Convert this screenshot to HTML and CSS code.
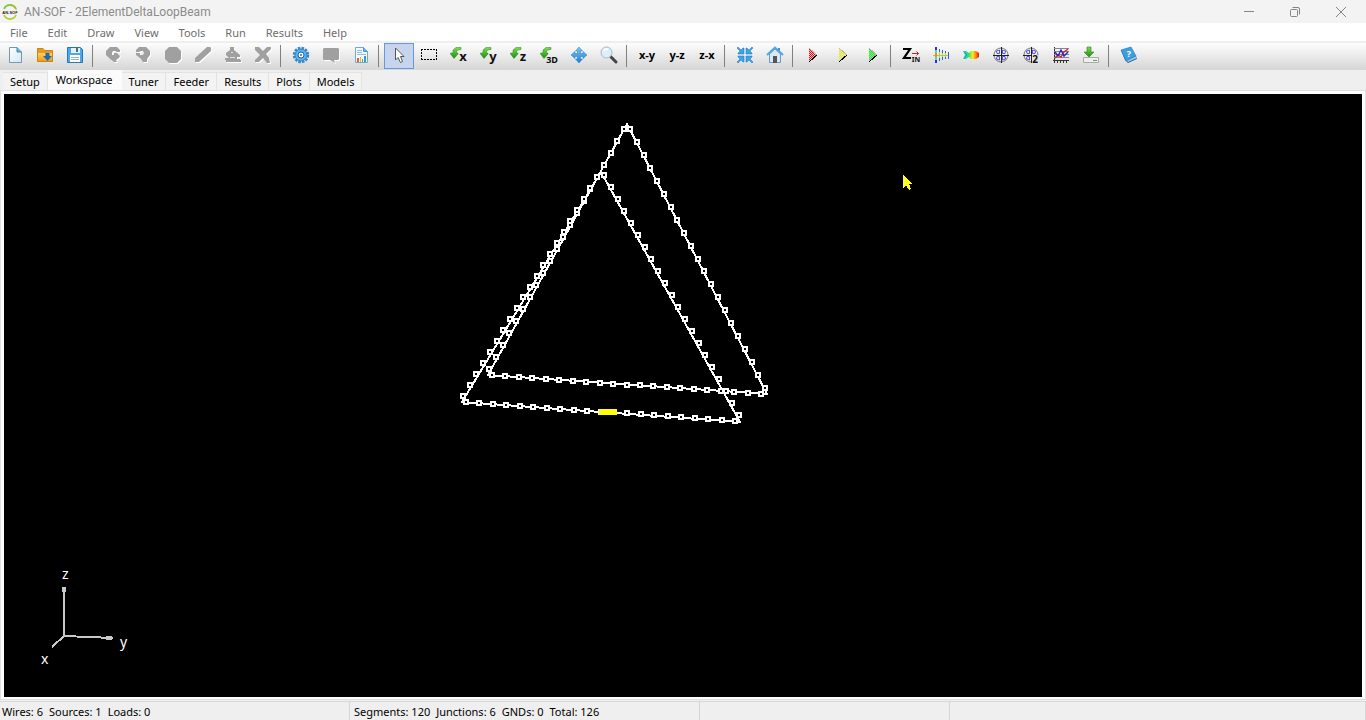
FILE: index.html
```html
<!DOCTYPE html>
<html lang="en">
<head>
<meta charset="utf-8">
<title>AN-SOF - 2ElementDeltaLoopBeam</title>
<link rel="stylesheet" href="styles.css">
</head>
<body>
<svg class="defs" aria-hidden="true">
  <defs>
    <linearGradient id="blue" x1="0" y1="0" x2="0" y2="1"><stop offset="0" stop-color="#7cc8f6"/><stop offset="1" stop-color="#1c7fd0"/></linearGradient>
    <linearGradient id="paper" x1="0" y1="0" x2="1" y2="1"><stop offset="0" stop-color="#ffffff"/><stop offset="1" stop-color="#d3e7f4"/></linearGradient>
    <linearGradient id="gold" x1="0" y1="0" x2="0" y2="1"><stop offset="0" stop-color="#ffd35c"/><stop offset="1" stop-color="#f19a1c"/></linearGradient>
    <linearGradient id="green" x1="0" y1="0" x2="0" y2="1"><stop offset="0" stop-color="#7be04c"/><stop offset="1" stop-color="#1d8a14"/></linearGradient>
    <linearGradient id="heat" x1="0" y1="0" x2="1" y2="0"><stop offset="0" stop-color="#22c7e8"/><stop offset=".35" stop-color="#28e070"/><stop offset=".6" stop-color="#f4ee20"/><stop offset=".8" stop-color="#ff8a10"/><stop offset="1" stop-color="#ee1010"/></linearGradient>
    <pattern id="dotRed" width="2" height="2" patternUnits="userSpaceOnUse"><rect width="2" height="2" fill="#d0d0d0"/><path d="M0 0h1v1h-1zM1 1h1v1h-1z" fill="#ff0000"/></pattern>
    <pattern id="dotYellow" width="2" height="2" patternUnits="userSpaceOnUse"><rect width="2" height="2" fill="#d0d0d0"/><path d="M0 0h1v1h-1zM1 1h1v1h-1z" fill="#ffff00"/></pattern>
    <pattern id="dotGreen" width="2" height="2" patternUnits="userSpaceOnUse"><rect width="2" height="2" fill="#b8c8b8"/><path d="M0 0h1v1h-1zM1 1h1v1h-1z" fill="#00ff00"/></pattern>
    <path id="turn" d="M12 2.500H7L4 5V8H1.500V9L5 13.500L9 9V8H7.500V6L9 5L12 4.500Z"/>
    <g id="rose" fill="none"><circle cx="10" cy="10" r="7" stroke="#777"/><path d="M2 10H18M10 2V18" stroke="#222" shape-rendering="crispEdges"/><path d="M8.500 8.500H6L5.500 6L8.500 5ZM11.500 8.500H14L14.500 6L11.500 5ZM8.500 11.500H6L5.500 14L8.500 15ZM11.500 11.500H14L14.500 14L11.500 15Z" stroke="#3030dd" stroke-width=".8"/></g>
  </defs>
</svg>

<header class="titlebar">
  <svg class="logo" viewBox="0 0 16 16"><path d="M2 5A6.500 6.500 0 0 1 14 5" fill="none" stroke="#8cc63c" stroke-width="1.800"/><path d="M2 11A6.500 6.500 0 0 0 14 11" fill="none" stroke="#b9ce2c" stroke-width="1.800"/><path d="M11 2.500Q14 4 14.500 6" fill="none" stroke="#f0a030"/><text x="8" y="10" text-anchor="middle" class="logo-text">AN-SOF</text></svg>
  <h1 class="title">AN-SOF - 2ElementDeltaLoopBeam</h1>
  <div class="window-buttons">
    <button aria-label="Minimize"><svg viewBox="0 0 12 12"><path d="M1 5.500H11"/></svg></button>
    <button aria-label="Restore"><svg viewBox="0 0 12 12"><rect x="1.500" y="3.500" width="7" height="7" rx="1"/><path d="M3.500 1.500H9Q10.500 1.500 10.500 3V8.500"/></svg></button>
    <button aria-label="Close"><svg viewBox="0 0 12 12"><path d="M1 1L11 11M11 1L1 11"/></svg></button>
  </div>
</header>

<nav class="menubar">
  <button>File</button><button>Edit</button><button>Draw</button><button>View</button><button>Tools</button><button>Run</button><button>Results</button><button>Help</button>
</nav>

<div class="toolbar" role="toolbar">
  <button aria-label="New"><svg viewBox="0 0 20 20"><path d="M4.500 2.500H12L16.500 7V17.500H4.500Z" fill="url(#paper)" stroke="#7996aa"/><path d="M12 2.500V7H16.500" fill="#58b4e8" stroke="#4888b0"/></svg></button>
  <button aria-label="Open"><svg viewBox="0 0 20 20"><path d="M2.500 3.500H8L9.500 5.500H17.500V16.500H2.500Z" fill="#e89a20" stroke="#c98516"/><path d="M3 8H17V16H3Z" fill="url(#gold)"/><path d="M10.500 8H14.500V11H17L12.500 16L8 11H10.500Z" fill="#1b6cb8"/></svg></button>
  <button aria-label="Save"><svg viewBox="0 0 20 20"><path d="M2.500 2.500H15.500L17.500 4.500V17.500H2.500Z" fill="#4aa9ea" stroke="#2377b8"/><rect x="6" y="3" width="9" height="5" fill="#e7f2fa"/><rect x="11" y="3" width="2" height="4" fill="#4b6e8a"/><rect x="5" y="10" width="10" height="7" fill="#fff"/><path d="M6 12.500H14M6 14.500H14" stroke="#9ab5c8"/></svg></button>
  <i class="sep"></i>
  <button class="off" aria-label="Undo"><svg viewBox="0 0 20 20"><path d="M7 2H14L17 5V7H14L12 6H10L9 8V10H11V8H14L17 11L16 13L13 15L14 17H11L7 14L3 10V6Z"/></svg></button>
  <button class="off" aria-label="Redo"><svg viewBox="0 0 20 20"><path d="M6 2H13L17 6V10L14 14V17H10L8 14L3 10V8H7V10H10L11 8L10 6H8L6 7H3V5Z"/></svg></button>
  <button class="off" aria-label="Stop"><svg viewBox="0 0 20 20"><path d="M6 2H14L18 6V14L14 18H6L2 14V6Z"/></svg></button>
  <button class="off" aria-label="Edit line"><svg viewBox="0 0 20 20"><path d="M14 2H17L18 3V6L6 17H2V13Z"/></svg></button>
  <button class="off" aria-label="Fill"><svg viewBox="0 0 20 20"><path d="M7 2H11V5L17 10V12H14V14H17V15H18V17H3V15H2V13H6L3 10V8L7 5Z"/><path d="M8 7.500H10M7 12.500H12" fill="none" stroke="#e5e5e5"/></svg></button>
  <button class="off" aria-label="Delete"><svg viewBox="0 0 20 20"><path d="M2 2H6L10 6L14 2H18V4L13 9L16 13L17 18H14L10 13L6 17H2V15L7 10L2 5Z"/></svg></button>
  <i class="sep"></i>
  <button aria-label="Settings"><svg viewBox="0 0 20 20"><circle cx="10" cy="10" r="7" fill="none" stroke="#3688c8" stroke-width="2.500" stroke-dasharray="2.500 1.200"/><circle cx="10" cy="10" r="6" fill="#58b2ef" stroke="#2e80c4"/><circle cx="10" cy="10" r="3" fill="#fff" stroke="#24639b"/><circle cx="10" cy="10" r="1" fill="#316fa4"/></svg></button>
  <button class="off" aria-label="Comment"><svg viewBox="0 0 20 20"><path d="M3 3H17L18 4V14L17 15H13L14 18L9 15H3L2 14V4Z"/></svg></button>
  <button aria-label="Report"><svg viewBox="0 0 20 20"><path d="M4.500 2.500H12.500L16.500 6.500V17.500H4.500Z" fill="#f4fbff" stroke="#77a9c8"/><path d="M12.500 2.500V6.500H16.500" fill="#5eb4e5" stroke="#4c9aca"/><path d="M6 5.500H11M6 7.500H11M6 9.500H15" stroke="#8ebedc"/><path d="M6 13H8V17H6Z" fill="#ec5830"/><path d="M9 12H10V17H9Z" fill="#f3b02d"/><path d="M11 14H12V17H11Z" fill="#48b558"/><path d="M13 11H15V17H13Z" fill="#339bdd"/></svg></button>
  <i class="sep"></i>
  <button class="active" aria-label="Select"><svg viewBox="0 0 20 20"><path d="M6.500 3V15L9 12.500L11.500 17.500L13.500 16.500L11.500 11.500H15Z" fill="#fff" stroke="#555"/></svg></button>
  <button aria-label="Select box"><svg viewBox="0 0 20 20"><path d="M2 4.500H18M2 14.500H18M2.500 4V15M17.500 4V15" fill="none" stroke="#000" stroke-dasharray="2 1" shape-rendering="crispEdges"/></svg></button>
  <button aria-label="Rotate x"><svg viewBox="0 0 20 20"><use href="#turn" class="turn"/><text x="14" y="16" class="axis">x</text></svg></button>
  <button aria-label="Rotate y"><svg viewBox="0 0 20 20"><use href="#turn" class="turn"/><text x="14" y="16" class="axis">y</text></svg></button>
  <button aria-label="Rotate z"><svg viewBox="0 0 20 20"><use href="#turn" class="turn"/><text x="14" y="16" class="axis">z</text></svg></button>
  <button aria-label="Rotate 3D"><svg viewBox="0 0 20 20"><use href="#turn" class="turn"/><text x="13" y="18" class="axis small">3D</text></svg></button>
  <button aria-label="Pan"><svg viewBox="0 0 20 20"><path d="M10 2L13.500 6H11.500V8.500H14V6.500L18 10L14 13.500V11.500H11.500V14H13.500L10 18L6.500 14H8.500V11.500H6V13.500L2 10L6 6.500V8.500H8.500V6H6.500Z" fill="url(#blue)" stroke="#247fc2" stroke-width=".5"/></svg></button>
  <button aria-label="Zoom"><svg viewBox="0 0 20 20"><path d="M11 11L17 17" stroke="#444" stroke-width="3" stroke-linecap="round"/><circle cx="7.500" cy="7.500" r="5.500" fill="#d8f0fb" stroke="#a6b5bd"/><path d="M4.500 6Q6 3.500 9 4.500" fill="none" stroke="#fff" stroke-width="2"/></svg></button>
  <i class="sep"></i>
  <button class="plane">x-y</button>
  <button class="plane">y-z</button>
  <button class="plane">z-x</button>
  <i class="sep"></i>
  <button aria-label="Fit"><svg viewBox="0 0 20 20"><path d="M2 3L3 2L6 5L8 3H9V9H3V8L5 6ZM18 3L17 2L14 5L12 3H11V9H17V8L15 6ZM2 17L3 18L6 15L8 17H9V11H3V12L5 14ZM18 17L17 18L14 15L12 17H11V11H17V12L15 14Z" fill="#38a7ea" stroke="#1f72b2" stroke-width=".5"/></svg></button>
  <button aria-label="Home"><svg viewBox="0 0 20 20"><path d="M4.500 9V17.500H15.500V9L10 4Z" fill="#d9e8f3" stroke="#6c9dc4"/><path d="M13 3H15V6H13Z" fill="#4d8cb5"/><path d="M2 10L10 2.500L18 10" fill="none" stroke="#4ba8e6" stroke-width="2"/><rect x="8" y="11" width="4" height="7" fill="#555"/></svg></button>
  <i class="sep"></i>
  <button aria-label="Run currents"><svg viewBox="0 0 20 20" shape-rendering="crispEdges"><path d="M6 3V17L14 10Z" fill="url(#dotRed)"/><path d="M6 3L14 10" stroke="#b8b8b8"/><path d="M6 17L14 10" stroke="#000"/></svg></button>
  <button aria-label="Run far field"><svg viewBox="0 0 20 20" shape-rendering="crispEdges"><path d="M6 3V17L14 10Z" fill="url(#dotYellow)"/><path d="M6 3L14 10" stroke="#b8b8b8"/><path d="M6 17L14 10" stroke="#000"/></svg></button>
  <button aria-label="Run all"><svg viewBox="0 0 20 20" shape-rendering="crispEdges"><path d="M6 3V17L14 10Z" fill="url(#dotGreen)"/><path d="M6 3L14 10" stroke="#b8b8b8"/><path d="M6 17L14 10" stroke="#000"/></svg></button>
  <i class="sep"></i>
  <button aria-label="Input impedance"><svg viewBox="0 0 20 20"><path d="M2 4H9L3 13H10" fill="none" stroke="#000" stroke-width="2.200"/><path d="M11 8.500H18M15.500 6.500L17.500 8.500L15.500 10.500" fill="none" stroke="#f01818"/><text x="15" y="17" class="axis tiny">IN</text></svg></button>
  <button aria-label="Currents"><svg viewBox="0 0 20 20" shape-rendering="crispEdges"><path d="M2 10H18" stroke="#e8b020"/><path d="M5 2V5M5 15V18" stroke="#2929ff" stroke-width="2"/><path d="M5 5V15" stroke="#40e0b0" stroke-width="2"/><path d="M5 8V12" stroke="#ff8030" stroke-width="2"/><path d="M8.500 4V16M11.500 5V15M14.500 6V14M17.500 7V14" stroke="#2464dc"/><path d="M8.500 7V13M11.500 8V12M14.500 8V12" stroke="#9fe229"/></svg></button>
  <button aria-label="Radiation pattern"><svg viewBox="0 0 20 20"><path d="M2 6H5L8 8L10 6H15L18 8V12L15 14H10L8 12L5 14H2L4 10Z" fill="url(#heat)"/><path d="M3 7L6 10L3 13" stroke="#279bab" fill="none"/></svg></button>
  <button aria-label="Polar plot"><svg viewBox="0 0 20 20"><use href="#rose"/></svg></button>
  <button aria-label="Polar plot 2"><svg viewBox="0 0 20 20"><use href="#rose"/><rect x="11" y="10" width="7" height="9" fill="#e3e3e3"/><text x="14" y="18" class="axis two">2</text></svg></button>
  <button aria-label="Line plot"><svg viewBox="0 0 20 20"><path d="M3.500 2V18M2 15.500H18M6.500 15V18M9.500 15V18M12.500 15V18M15.500 15V18" stroke="#333" shape-rendering="crispEdges"/><path d="M3 3.500H18M3 6.500H18M3 9.500H18M3 12.500H18" stroke="#888" shape-rendering="crispEdges"/><path d="M4 13L7 10L10 12L13 7L17 4" fill="none" stroke="#df2020" stroke-width="1.400"/><path d="M4 7L7 11L10 5L13 11L17 7" fill="none" stroke="#2525ca" stroke-width="1.400"/></svg></button>
  <button aria-label="Export"><svg viewBox="0 0 20 20"><path d="M2.500 12.500H17.500V17.500H2.500Z" fill="#eee" stroke="#aaa"/><path d="M12 15.500H16" stroke="#44bd31"/><path d="M6 2H10V7H13L8 12L3 7H6Z" fill="url(#green)" stroke="#278817" stroke-width=".6"/></svg></button>
  <i class="sep"></i>
  <button aria-label="Help guide"><svg viewBox="0 0 20 20"><path d="M2 5L6 15L9 18L18 14L17 11Z" fill="#15609d"/><path d="M7 15L17 11L18 13L9 17Z" fill="#9fcbe8"/><path d="M2 5L12 2L17 11L7 16Z" fill="#3b9ee0" stroke="#2477b4" stroke-width=".6"/><text x="10" y="12" class="axis query">?</text></svg></button>
</div>

<div class="tabs" role="tablist">
  <button role="tab">Setup</button><button role="tab" aria-selected="true" class="current">Workspace</button><button role="tab">Tuner</button><button role="tab">Feeder</button><button role="tab">Results</button><button role="tab">Plots</button><button role="tab">Models</button>
</div>

<main class="panel">
  <div class="canvas">
    <svg class="scene" width="900" height="600" role="img" aria-label="Two element delta loop wires">
      <g id="wires" fill="none" stroke="#fff" stroke-width="2"></g>
      <g id="nodes" fill="#000" stroke="#fff" stroke-width="2"></g>
      <path d="M595 318H613" stroke="#ffff00" stroke-width="6"/>
      <path d="M899 81V94L902 91L905 96L907 95L905 90H909Z" fill="#ffff20"/>
      <g fill="none" stroke="#c8c8c8" stroke-width="2"><path d="M60 542V493M60 542L109 544M60 542L48 553"/><path d="M60 493V498M102 544L108 544" stroke-width="4"/></g>
      <g class="axis-names"><text x="58" y="485">z</text><text x="116" y="553">y</text><text x="37" y="570">x</text></g>
    </svg>
  </div>
</main>

<footer class="status">
  <div class="cell wide"><span>Wires: 6</span><span>Sources: 1</span><span>Loads: 0</span></div>
  <div class="cell wide"><span>Segments: 120</span><span>Junctions: 6</span><span>GNDs: 0</span><span>Total: 126</span></div>
  <div class="cell mid"></div>
  <div class="cell rest"></div>
</footer>
<script src="script.js"></script>
</body>
</html>
```
FILE: styles.css
```css
* { box-sizing: border-box; }
body {
  margin: 0;
  height: 100vh;
  display: flex;
  flex-direction: column;
  overflow: hidden;
  background: #efefef;
  color: #000;
  font: 11px/14px "Noto Sans", "Open Sans", sans-serif;
}
button { font: inherit; color: inherit; background: none; border: 0; padding: 0; margin: 0; }
.defs { position: absolute; width: 0; height: 0; }

.titlebar { display: flex; align-items: center; height: 23px; padding: 0 2px; background: #f3f3f3; color: #8b8b8b; }
.logo { width: 16px; height: 16px; }
.logo-text { font: bold 4px "Liberation Sans", sans-serif; fill: #222; }
.title { flex: 1; margin: 0 0 0 6px; font: 12px/14px Roboto, sans-serif; }
.window-buttons { display: flex; }
.window-buttons button { width: 46px; height: 22px; display: flex; align-items: center; justify-content: center; }
.window-buttons svg { width: 12px; height: 12px; fill: none; stroke: #858585; }

.menubar { display: flex; height: 18px; background: #fff; color: #6d6d6d; }
.menubar button { padding: 1px 10px 0; }

.toolbar { display: flex; height: 29px; border-top: 2px solid #efefef; background: linear-gradient(#fdfdfd, #d6d6d6); }
.toolbar button { width: 30px; height: 26px; display: flex; align-items: center; justify-content: center; }
.toolbar svg { width: 20px; height: 20px; margin-bottom: 2px; }
.toolbar .active { background: #c6d4ee; border: 1px solid #6a96dc; }
.sep { width: 8px; padding: 2px 0 0 2px; }
.sep::before { content: ""; display: block; width: 1px; height: 22px; background: #808080; }
.off svg { fill: #a0a0a0; filter: drop-shadow(1px 1px 0 #fff); }
.turn { fill: url(#green); stroke: #238a18; stroke-width: 0.5; }
.axis { font: bold 13px "Noto Sans", sans-serif; text-anchor: middle; fill: #111; }
.small { font-size: 9px; }
.tiny { font-size: 7px; }
.two { font-size: 10px; }
.query { font-size: 9px; fill: #fff; }
.toolbar .plane { font-weight: bold; padding-bottom: 2px; }

.tabs { display: flex; align-items: flex-end; height: 20px; padding-left: 3px; }
.tabs button { height: 18px; padding: 0 7px; background: #f3f3f3; border: 1px solid #e3e3e3; border-width: 1px 1px 0 0; }
.tabs .current { height: 20px; padding: 0 8px 2px; background: #fbfbfb; border-color: #fbfbfb; }

.panel { flex: 1; display: flex; min-height: 0; padding: 3px 3px 2px; border: 1px solid #e0e0e0; background: #fdfdfd; }
.canvas { flex: 1; overflow: hidden; background: #000; }
.scene { display: block; overflow: visible; shape-rendering: crispEdges; }
.axis-names { font-size: 14px; fill: #fff; }

.status { display: flex; height: 19px; margin-top: 1px; border-top: 1px solid #d8d8d8; }
.cell { display: flex; gap: 6px; padding: 3px 4px 0; border-right: 1px solid #d5d5d5; white-space: nowrap; }
.cell:first-child { padding-left: 2px; }
.wide { width: 350px; }
.mid { width: 250px; }
.rest { flex: 1; }
```
FILE: script.js
```js
const SVG = "http://www.w3.org/2000/svg";
const loops = [
  { outline: [[623, 30], [763, 300], [484, 281]],
    sides: [[626, 35, 761, 294], [620, 35, 485, 275], [488, 281, 757, 300]] },
  { outline: [[597, 78], [736, 328], [458, 308]],
    sides: [[600, 81, 735, 321], [593, 83, 459, 302], [462, 308, 731, 327]] }
];

function add(parent, name, attributes) {
  const element = document.createElementNS(SVG, name);
  for (const key in attributes) element.setAttribute(key, attributes[key]);
  document.getElementById(parent).appendChild(element);
}

for (const loop of loops) {
  add("wires", "polygon", { points: loop.outline.join(" ") });
  for (const [x1, y1, x2, y2] of loop.sides) {
    for (let i = 0; i <= 20; i++) {
      const x = Math.round(x1 + (x2 - x1) * i / 20);
      const y = Math.round(y1 + (y2 - y1) * i / 20);
      add("nodes", "rect", { x: x - 2, y: y - 2, width: 4, height: 4 });
    }
  }
}
```
